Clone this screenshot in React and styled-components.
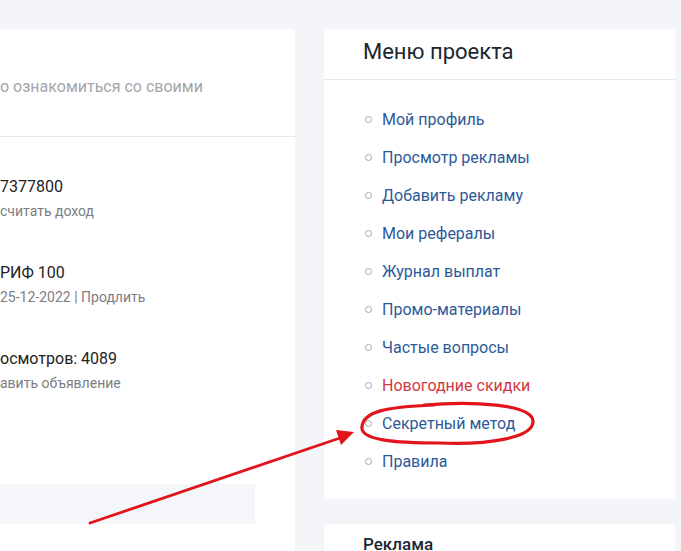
import React from 'react';
import styled, { createGlobalStyle } from 'styled-components';

const Global = createGlobalStyle`
    body {
        margin: 0;
        background: #f4f5f9;
        font-family: Roboto, "Liberation Sans", sans-serif;
    }
`;

const menu = [
    { title: 'Мой профиль' },
    { title: 'Просмотр рекламы' },
    { title: 'Добавить рекламу' },
    { title: 'Мои рефералы' },
    { title: 'Журнал выплат' },
    { title: 'Промо-материалы' },
    { title: 'Частые вопросы' },
    { title: 'Новогодние скидки', hot: true },
    { title: 'Секретный метод' },
    { title: 'Правила' },
];

const stats = [
    { value: '7377800', note: 'считать доход' },
    { value: 'РИФ 100', note: '25-12-2022 | Продлить' },
    { value: 'осмотров: 4089', note: 'авить объявление' },
];

const App = () => {
    return (
        <Page>
            <Global />
            <LeftCol>
                <Card>
                    <CardHead>
                        <Intro>о ознакомиться со своими</Intro>
                    </CardHead>
                    <StatList>
                        {stats.map((s) => (
                            <Stat key={s.value}>
                                <Value>{s.value}</Value>
                                <Note>{s.note}</Note>
                            </Stat>
                        ))}
                    </StatList>
                    <GrayBar />
                </Card>
            </LeftCol>
            <RightCol>
                <MenuCard>
                    <MenuHead>Меню проекта</MenuHead>
                    <MenuList>
                        {menu.map((m) => (
                            <MenuItem key={m.title} hot={m.hot}>
                                <Dot />
                                {m.title}
                            </MenuItem>
                        ))}
                    </MenuList>
                </MenuCard>
                <AdCard>
                    <AdTitle>Реклама</AdTitle>
                </AdCard>
            </RightCol>
            {/* красная пометка поверх скриншота */}
            <Marks width="681" height="551" viewBox="0 0 681 551">
                <path
                    d="M 424 405 C 472 401, 532 404, 533 421 C 534 438, 488 445, 440 443 C 394 443, 360 440, 362 427 C 363 412, 384 407, 434 405"
                    fill="none"
                    stroke="#e0141a"
                    strokeWidth="3.2"
                    strokeLinecap="round"
                />
                <line x1="90" y1="523" x2="340" y2="438" stroke="#e0141a" strokeWidth="2.8" strokeLinecap="round" />
                <polygon points="354,432 336,430 341,445" fill="#e0141a" />
            </Marks>
        </Page>
    );
};

const Page = styled.div`
    position: relative;
    display: flex;
    gap: 29px;
    width: 681px;
    height: 551px;
    padding-top: 29px;
    box-sizing: border-box;
    overflow: hidden;
`;

const LeftCol = styled.div`
    width: 295px;
    flex-shrink: 0;
`;

const Card = styled.div`
    background: #fff;
    border-radius: 0 4px 0 0;
    height: 600px;
`;

const CardHead = styled.div`
    height: 108px;
    border-bottom: 1px solid #e9eaef;
    padding-top: 47px;
    box-sizing: border-box;
`;

const Intro = styled.div`
    font-size: 16px;
    line-height: 22px;
    color: #a3a5ab;
`;

const StatList = styled.div`
    display: flex;
    flex-direction: column;
    gap: 42px;
    padding-top: 40px;
`;

const Stat = styled.div`
    display: flex;
    flex-direction: column;
    gap: 4px;
`;

const Value = styled.div`
    font-size: 16px;
    line-height: 20px;
    color: #222;
`;

const Note = styled.div`
    font-size: 14px;
    line-height: 20px;
    color: #7b7d82;
`;

const GrayBar = styled.div`
    width: 255px;
    height: 40px;
    margin-top: 91px;
    background: #f5f6fa;
`;

const RightCol = styled.div`
    width: 351px;
    flex-shrink: 0;
    display: flex;
    flex-direction: column;
    gap: 25px;
`;

const MenuCard = styled.div`
    background: #fff;
`;

const MenuHead = styled.div`
    height: 51px;
    border-bottom: 1px solid #e9eaef;
    padding: 8px 0 0 39px;
    box-sizing: border-box;
    font-size: 22px;
    line-height: 30px;
    color: #1b2631;
`;

const MenuList = styled.ul`
    list-style: none;
    margin: 0;
    padding: 20px 0 19px 41px;
`;

const MenuItem = styled.li`
    display: flex;
    align-items: center;
    gap: 10px;
    height: 38px;
    font-size: 16px;
    color: ${(p) => (p.hot ? '#d03a44' : '#2c5a98')};
`;

const Dot = styled.span`
    width: 5px;
    height: 5px;
    border: 1px solid #a6a8ad;
    border-radius: 50%;
`;

const AdCard = styled.div`
    background: #fff;
    padding: 9px 0 0 39px;
    height: 60px;
`;

const AdTitle = styled.div`
    font-size: 17px;
    font-weight: 500;
    line-height: 22px;
    color: #1b2631;
`;

const Marks = styled.svg`
    position: absolute;
    top: 0;
    left: 0;
    pointer-events: none;
`;

export default App;
